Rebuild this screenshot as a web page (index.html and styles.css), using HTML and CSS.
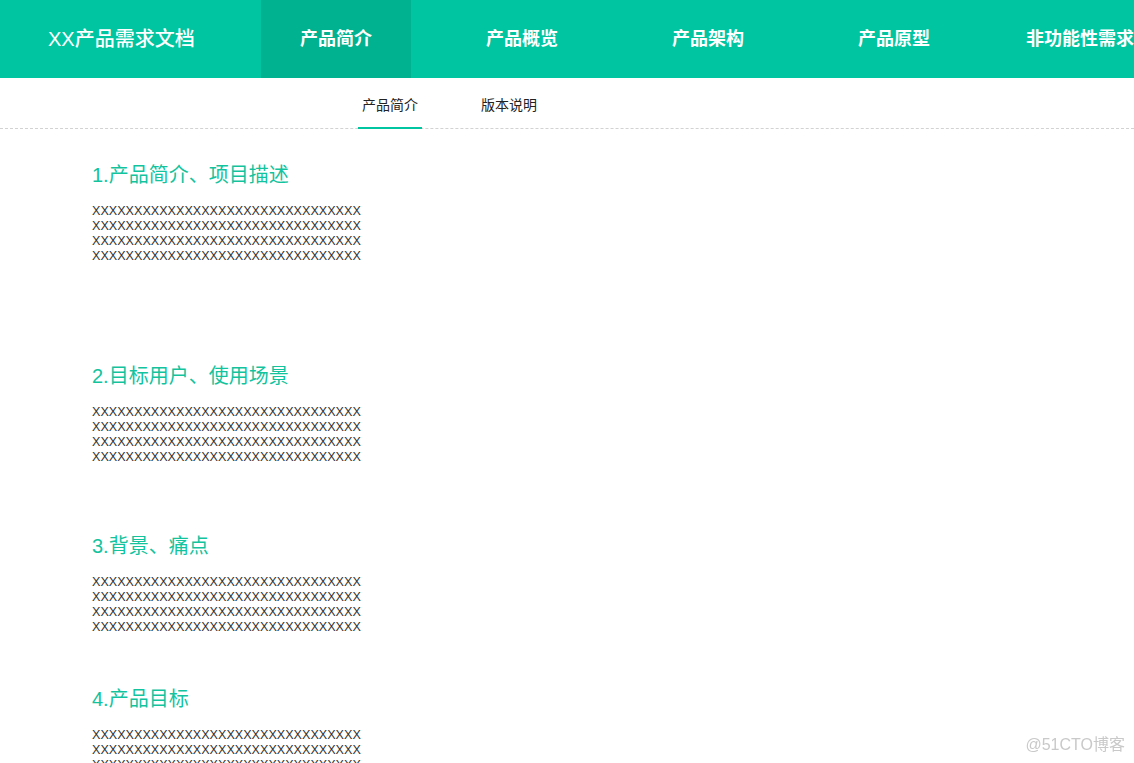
FILE: index.html
```html
<!DOCTYPE html>
<html lang="zh">
<head>
<meta charset="utf-8">
<title>XX产品需求文档</title>
<link rel="stylesheet" href="styles.css">
</head>
<body>
<header class="topbar">
  <div class="logo">XX产品需求文档</div>
  <nav class="mainnav">
    <a class="navitem active">产品简介</a>
    <a class="navitem">产品概览</a>
    <a class="navitem">产品架构</a>
    <a class="navitem">产品原型</a>
    <a class="navitem">非功能性需求</a>
  </nav>
</header>
<div class="subnav">
  <a class="tab active">产品简介</a>
  <a class="tab">版本说明</a>
</div>
<main class="content">
  <section class="sec sec1">
    <h2>1.产品简介、项目描述</h2>
    <p>XXXXXXXXXXXXXXXXXXXXXXXXXXXXXXXX<br>XXXXXXXXXXXXXXXXXXXXXXXXXXXXXXXX<br>XXXXXXXXXXXXXXXXXXXXXXXXXXXXXXXX<br>XXXXXXXXXXXXXXXXXXXXXXXXXXXXXXXX</p>
  </section>
  <section class="sec sec2">
    <h2>2.目标用户、使用场景</h2>
    <p>XXXXXXXXXXXXXXXXXXXXXXXXXXXXXXXX<br>XXXXXXXXXXXXXXXXXXXXXXXXXXXXXXXX<br>XXXXXXXXXXXXXXXXXXXXXXXXXXXXXXXX<br>XXXXXXXXXXXXXXXXXXXXXXXXXXXXXXXX</p>
  </section>
  <section class="sec sec3">
    <h2>3.背景、痛点</h2>
    <p>XXXXXXXXXXXXXXXXXXXXXXXXXXXXXXXX<br>XXXXXXXXXXXXXXXXXXXXXXXXXXXXXXXX<br>XXXXXXXXXXXXXXXXXXXXXXXXXXXXXXXX<br>XXXXXXXXXXXXXXXXXXXXXXXXXXXXXXXX</p>
  </section>
  <section class="sec sec4">
    <h2>4.产品目标</h2>
    <p>XXXXXXXXXXXXXXXXXXXXXXXXXXXXXXXX<br>XXXXXXXXXXXXXXXXXXXXXXXXXXXXXXXX<br>XXXXXXXXXXXXXXXXXXXXXXXXXXXXXXXX<br>XXXXXXXXXXXXXXXXXXXXXXXXXXXXXXXX</p>
  </section>
</main>
<div class="watermark">@51CTO博客</div>
</body>
</html>
```
FILE: styles.css
```css
* { box-sizing: border-box; }
html, body { margin: 0; padding: 0; background: #fff; }
body {
  font-family: "Liberation Sans", "Noto Sans CJK SC", sans-serif;
  color: #333;
  overflow: hidden;
  height: 763px;
}
.topbar {
  display: flex;
  height: 78px;
  background: #00c5a1;
  color: #fff;
  overflow: hidden;
}
.logo {
  flex: 0 0 261px;
  width: 261px;
  padding-left: 48px;
  font-size: 20px;
  line-height: 78px;
  font-weight: 500;
  white-space: nowrap;
}
.mainnav {
  display: flex;
  flex: 0 0 auto;
  gap: 36px;
  white-space: nowrap;
}
.navitem {
  flex: 0 0 150px;
  width: 150px;
  text-align: center;
  font-size: 18px;
  font-weight: bold;
  line-height: 78px;
  color: #fff;
}
.navitem.active { background: #00b290; }
.subnav {
  display: flex;
  gap: 55px;
  padding-left: 358px;
  height: 51px;
  border-bottom: 1px dashed #d2d2d2;
}
.tab {
  height: 51px;
  margin-bottom: -1px;
  padding: 16px 4px 0;
  font-size: 14px;
  line-height: 22px;
  color: #222;
  border-bottom: 2px solid transparent;
  position: relative;
}
.tab.active { border-bottom-color: #00c5a1; }
.content { padding-left: 92px; }
.sec h2 {
  margin: 0 0 15px;
  font-size: 20px;
  font-weight: normal;
  line-height: 28px;
  color: #12c39e;
}
.sec p {
  margin: 0;
  font-size: 12.6px;
  line-height: 15px;
  color: #333;
}
.sec1 { margin-top: 32px; }
.sec2 { margin-top: 98px; }
.sec3 { margin-top: 67px; }
.sec4 { margin-top: 50px; }
.watermark {
  position: fixed;
  right: 9px;
  bottom: 8px;
  font-size: 16px;
  color: #c9c9c9;
  font-family: "Liberation Sans", "Noto Sans CJK SC", sans-serif;
}
```
